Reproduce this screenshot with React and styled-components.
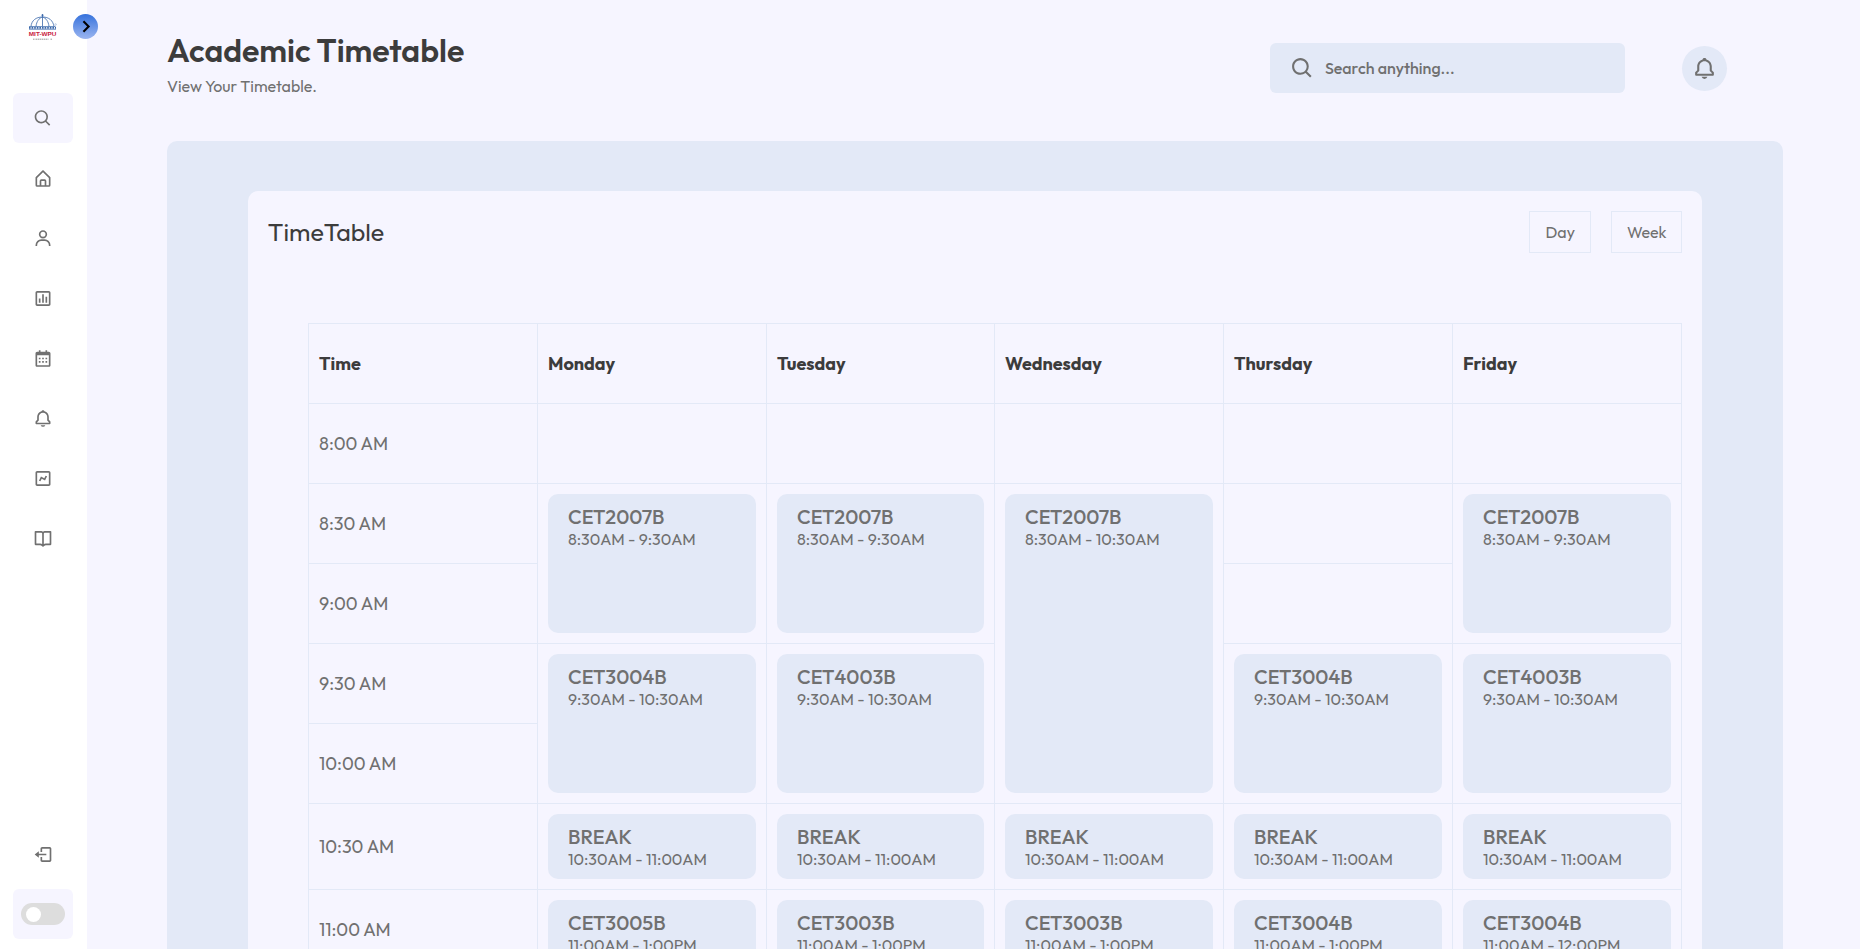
import React from "react";
import styled, { createGlobalStyle } from "styled-components";
import {
  BiSearch,
  BiHomeAlt,
  BiUser,
  BiBarChartSquare,
  BiCalendar,
  BiBell,
  BiChart,
  BiBookOpen,
  BiLogOut,
  BiChevronRight,
} from "react-icons/bi";

const color = {
  body: "#f6f5ff",
  panel: "#e3e9f7",
  text: "#707070",
  dark: "#3c3c3c",
  toggle: "#dddddd",
};

const GlobalStyle = createGlobalStyle`
  * { box-sizing: border-box; margin: 0; padding: 0; }
  body {
    background: ${color.body};
    color: ${color.text};
    font-family: Outfit, Lato, sans-serif;
  }
  svg { display: block; }
`;

const Page = styled.div`
  display: flex;
  height: 100vh;
  overflow: hidden;
`;

const Sidebar = styled.nav`
  position: relative;
  display: flex;
  flex-direction: column;
  flex: none;
  width: 87px;
  padding: 13px 14px 10px 13px;
  background: #fff;
`;

const LogoBox = styled.div`
  height: 80px;
  padding-left: 14px;
`;

const Collapse = styled.button`
  position: absolute;
  top: 14.3px;
  left: 73px;
  display: grid;
  place-items: center;
  width: 25px;
  height: 25px;
  border: 0;
  border-radius: 50%;
  background: linear-gradient(#3672dc, #9bb5f0);
  color: #000;
  font-size: 25px;
`;

const NavItem = styled.div`
  display: grid;
  place-items: center;
  flex: none;
  width: 60px;
  height: 50px;
  margin-bottom: 10px;
  border-radius: 6px;
  background: ${(p) => (p.$filled ? color.body : "transparent")};
  font-size: 20px;
  svg { transform: translate(0, 0.5px); }
`;

const NavBottom = styled.div`
  margin-top: auto;
  ${NavItem}:last-child { margin-bottom: 0; }
`;

const Switch = styled.div`
  display: flex;
  align-items: center;
  width: 44px;
  height: 22px;
  padding-left: 5px;
  border-radius: 25px;
  background: ${color.toggle};
`;

const Knob = styled.div`
  width: 15px;
  height: 15px;
  border-radius: 50%;
  background: #fff;
`;

const Main = styled.main`
  flex: 1;
  padding: 0 77px 0 80px;
`;

const Header = styled.header`
  display: flex;
  align-items: flex-start;
  height: 141px;
`;

const Heading = styled.div`
  flex: 1;
  padding-top: 30px;
`;

const Title = styled.h1`
  font-size: 32px;
  font-weight: 600;
  line-height: 40px;
  color: ${color.dark};
`;

const Subtitle = styled.p`
  padding-top: 6px;
  font-size: 16px;
  line-height: 20px;
`;

const SearchBox = styled.div`
  display: flex;
  align-items: center;
  width: 355px;
  height: 50px;
  margin: 43px 57px 0 0;
  padding-left: 20px;
  gap: 10px;
  border-radius: 6px;
  background: ${color.panel};
  font-size: 16px;
  font-weight: 500;
  svg { width: 25px; height: 25px; }
`;

const BellButton = styled.div`
  display: grid;
  place-items: center;
  width: 45px;
  height: 45px;
  margin: 46px 56px 0 0;
  border-radius: 50%;
  background: ${color.panel};
  font-size: 25px;
`;

const Panel = styled.section`
  padding: 50px 5%;
  border-radius: 10px;
  background: ${color.panel};
`;

const Card = styled.div`
  padding: 20px;
  border-radius: 10px;
  background: ${color.body};
`;

const CardHead = styled.div`
  display: flex;
  align-items: center;
  gap: 20px;
  margin-bottom: 70px;
`;

const CardTitle = styled.h2`
  flex: 1;
  font-size: 25px;
  font-weight: 400;
  line-height: 32px;
  color: ${color.dark};
`;

const ViewButton = styled.button`
  width: ${(p) => p.$width}px;
  height: 42px;
  border: 1px solid ${color.panel};
  background: transparent;
  color: ${color.text};
  font: inherit;
  font-size: 16px;
`;

const Grid = styled.div`
  display: grid;
  grid-template-columns: 229px 229px 228px 229px 229px 1fr;
  grid-template-rows: repeat(6, 80px) 86px repeat(2, 80px);
  margin-left: 40.2px;
  border: solid ${color.panel};
  border-width: 1px 0 0 1px;
`;

const Cell = styled.div`
  grid-column: ${(p) => p.$col};
  grid-row: ${(p) => p.$row} / span ${(p) => p.$span || 1};
  display: flex;
  align-items: center;
  min-width: 0;
  padding: ${(p) => (p.$lesson ? "10px" : "0 10px")};
  border: solid ${color.panel};
  border-width: 0 1px 1px 0;
`;

const DayName = styled.strong`
  font-size: 18px;
  font-weight: 700;
  color: ${color.dark};
`;

const TimeLabel = styled.span`
  font-size: 18px;
  font-weight: 400;
`;

const Lesson = styled.div`
  align-self: stretch;
  flex: 1;
  padding: 10px 20px;
  border-radius: 10px;
  background: ${color.panel};
`;

const LessonCode = styled.div`
  font-size: 20px;
  font-weight: 500;
  line-height: 25px;
`;

const LessonTime = styled.div`
  font-size: 16px;
  line-height: 20px;
  white-space: nowrap;
`;

const NAV = [BiHomeAlt, BiUser, BiBarChartSquare, BiCalendar, BiBell, BiChart, BiBookOpen];

const DAYS = ["Time", "Monday", "Tuesday", "Wednesday", "Thursday", "Friday"];
const TIMES = ["8:00 AM", "8:30 AM", "9:00 AM", "9:30 AM", "10:00 AM", "10:30 AM", "11:00 AM"];

// Each entry: column, first row, rows covered, code, time. No code means a free slot.
const SLOTS = [
  ...[2, 3, 4, 5, 6].map((col) => [col, 2, 1]),
  [2, 3, 2, "CET2007B", "8:30AM - 9:30AM"],
  [3, 3, 2, "CET2007B", "8:30AM - 9:30AM"],
  [4, 3, 4, "CET2007B", "8:30AM - 10:30AM"],
  [5, 3, 1],
  [5, 4, 1],
  [6, 3, 2, "CET2007B", "8:30AM - 9:30AM"],
  [2, 5, 2, "CET3004B", "9:30AM - 10:30AM"],
  [3, 5, 2, "CET4003B", "9:30AM - 10:30AM"],
  [5, 5, 2, "CET3004B", "9:30AM - 10:30AM"],
  [6, 5, 2, "CET4003B", "9:30AM - 10:30AM"],
  ...[2, 3, 4, 5, 6].map((col) => [col, 7, 1, "BREAK", "10:30AM - 11:00AM"]),
  [2, 8, 2, "CET3005B", "11:00AM - 1:00PM"],
  [3, 8, 2, "CET3003B", "11:00AM - 1:00PM"],
  [4, 8, 2, "CET3003B", "11:00AM - 1:00PM"],
  [5, 8, 2, "CET3004B", "11:00AM - 1:00PM"],
  [6, 8, 2, "CET3004B", "11:00AM - 12:00PM"],
];

function Logo() {
  return (
    <svg width="32" height="30" viewBox="0 0 32 30">
      <g fill="none" stroke="#3a68ab" strokeWidth="0.8">
        <path d="M4 13.500C4.500 7.500 9 4 15.500 4S26 7.500 27 13.500" />
        <path d="M9 13.500C9.500 8.500 12 5 15.500 4C19 5 21.500 8.500 22 13.500" />
        <path d="M15.500 1V13.500" />
        <path d="M2 13.600H28.500M2 16.200H29" />
        <path d="M2 14.900H29" strokeDasharray="1.600 1" strokeWidth="1.800" />
      </g>
      <circle cx="15.500" cy="2.200" r="1" fill="#3a68ab" />
      <circle cx="28.600" cy="11.500" r="0.800" fill="none" stroke="#8aa4cb" strokeWidth="0.500" />
      <text x="1.800" y="23.200" textLength="27.700" lengthAdjust="spacingAndGlyphs" fontFamily="Liberation Sans, sans-serif" fontSize="6.200" fontWeight="700" fill="#c8203c">
        MIT-WPU
      </text>
      <path d="M6 26.200H7.500M8.500 26.200H21.500M23.500 26.200H25" stroke="#999" strokeWidth="1" strokeDasharray="1.500 0.500" />
    </svg>
  );
}

export default function App() {
  return (
    <Page>
      <GlobalStyle />
      <Sidebar>
        <LogoBox>
          <Logo />
        </LogoBox>
        <Collapse aria-label="Expand">
          <BiChevronRight />
        </Collapse>
        <NavItem $filled>
          <BiSearch />
        </NavItem>
        {NAV.map((Icon, i) => (
          <NavItem key={i}>
            <Icon />
          </NavItem>
        ))}
        <NavBottom>
          <NavItem>
            <BiLogOut />
          </NavItem>
          <NavItem $filled>
            <Switch>
              <Knob />
            </Switch>
          </NavItem>
        </NavBottom>
      </Sidebar>
      <Main>
        <Header>
          <Heading>
            <Title>Academic Timetable</Title>
            <Subtitle>View Your Timetable.</Subtitle>
          </Heading>
          <SearchBox>
            <BiSearch />
            <span>Search anything...</span>
          </SearchBox>
          <BellButton>
            <BiBell />
          </BellButton>
        </Header>
        <Panel>
          <Card>
            <CardHead>
              <CardTitle>TimeTable</CardTitle>
              <ViewButton $width={62}>Day</ViewButton>
              <ViewButton $width={71}>Week</ViewButton>
            </CardHead>
            <Grid>
              {DAYS.map((day, i) => (
                <Cell key={day} $col={i + 1} $row={1}>
                  <DayName>{day}</DayName>
                </Cell>
              ))}
              {TIMES.map((time, i) => (
                <Cell key={time} $col={1} $row={i + 2}>
                  <TimeLabel>{time}</TimeLabel>
                </Cell>
              ))}
              {SLOTS.map(([col, row, span, code, time]) => (
                <Cell key={`${col}-${row}`} $col={col} $row={row} $span={span} $lesson={Boolean(code)}>
                  {code && (
                    <Lesson>
                      <LessonCode>{code}</LessonCode>
                      <LessonTime>{time}</LessonTime>
                    </Lesson>
                  )}
                </Cell>
              ))}
            </Grid>
          </Card>
        </Panel>
      </Main>
    </Page>
  );
}
